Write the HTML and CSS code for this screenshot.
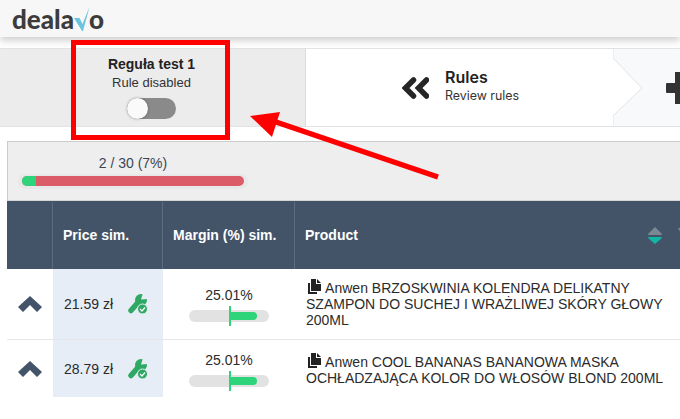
FILE: index.html
```html
<!DOCTYPE html>
<html lang="pl">
<head>
<meta charset="utf-8">
<title>Dealavo</title>
<link rel="stylesheet" href="styles.css">
</head>
<body>
<header class="topbar">
  <div class="logo"><span>deala</span><svg class="logo-v" width="16" height="25" viewBox="0 0 16 25"><path d="M0 11 H5.500 L8.500 17 L15.500 0 L9 24 H8 Z" fill="#6cc5de"/></svg><span>o</span></div>
</header>
<nav class="steps">
  <div class="step step-rule">
    <div class="rule-title">Reguła test 1</div>
    <div class="rule-sub">Rule disabled</div>
    <div class="toggle"><span class="knob"></span></div>
  </div>
  <div class="step step-rules">
    <svg class="dbl" width="27" height="22" viewBox="0 0 27 22"><path d="M11.500 3 L3.500 11 L11.500 19 M24.500 3 L16.500 11 L24.500 19" fill="none" stroke="#262626" stroke-width="5.500" stroke-linecap="round"/></svg>
    <div class="rules-text">
      <div class="rules-title">Rules</div>
      <div class="rules-sub">Review rules</div>
    </div>
  </div>
  <div class="step step-add">
    <svg class="chev" width="30" height="79" viewBox="0 0 30 79"><path d="M0 0 V10 L29 40 L0 68 V78" fill="#fff" stroke="#e3e3e3" stroke-width="1"/></svg>
    <svg class="plus" width="14" height="32" viewBox="0 0 14 32"><path d="M9 0 H14 V32 H9 V21 H1 Q0 21 0 20 V12 Q0 11 1 11 H9 Z" fill="#333"/></svg>
  </div>
</nav>
<section class="panel">
  <div class="progress">
    <div class="progress-label">2 / 30 (7%)</div>
    <div class="track"><div class="bar"><span class="bar-ok"></span></div></div>
  </div>
</section>
<div class="table">
  <div class="row head">
    <div class="c c1"></div>
    <div class="c c2">Price sim.</div>
    <div class="c c3">Margin (%) sim.</div>
    <div class="c c4">Product
      <svg class="sort" width="14" height="18" viewBox="0 0 14 18"><path d="M7 0 L14 7 Q14 8 13 8 H1 Q0 8 0 7 Z" fill="#7b8794"/><path d="M1 10 H13 Q14 10 14 11 L7 17 L0 11 Q0 10 1 10 Z" fill="#13b5a5"/></svg>
      <svg class="filter" width="8" height="8" viewBox="0 0 8 8"><path d="M0 0 H8 L4 7 Z" fill="#7b8794"/></svg>
    </div>
  </div>
  <div class="row r1">
    <div class="c c1"><svg width="24" height="16" viewBox="0 0 24 16"><path d="M0 11 L12 0 L24 11 L19 16 L12 9 L5 16 Z" fill="#43546a"/></svg></div>
    <div class="c c2 price"><span>21.59 zł</span>
      <svg class="wrench" width="20" height="20" viewBox="0 0 20 20"><circle cx="13" cy="6" r="6" fill="#2fa864"/><path d="M3 16.500 L10 8.500" stroke="#2fa864" stroke-width="5.500" stroke-linecap="round"/><path d="M13 5.500 L15 -1 H21 V5 Z" fill="#e6edf6"/><circle cx="14.500" cy="15" r="5" fill="#2fa864" stroke="#e6edf6" stroke-width="1"/><path d="M12 15 L14 17 L17 13.500" fill="none" stroke="#fff" stroke-width="1.200"/></svg>
    </div>
    <div class="c c3 margin"><div class="pct">25.01%</div><div class="gauge"><span class="gauge-fill"></span><span class="gauge-tick"></span></div></div>
    <div class="c c4 prod"><div><svg class="copy" width="14" height="15" viewBox="0 0 14 15"><path d="M3 0 H8 V5 H13 V12 H3 Z M9 0 L13 4 H9 Z M0 4 H2 V13 H9 V15 H0 Z" fill="#222"/></svg> Anwen BRZOSKWINIA KOLENDRA DELIKATNY SZAMPON DO SUCHEJ I WRAŻLIWEJ SKÓRY GŁOWY 200ML</div></div>
  </div>
  <div class="row r2">
    <div class="c c1"><svg width="24" height="16" viewBox="0 0 24 16"><path d="M0 11 L12 0 L24 11 L19 16 L12 9 L5 16 Z" fill="#43546a"/></svg></div>
    <div class="c c2 price"><span>28.79 zł</span>
      <svg class="wrench" width="20" height="20" viewBox="0 0 20 20"><circle cx="13" cy="6" r="6" fill="#2fa864"/><path d="M3 16.500 L10 8.500" stroke="#2fa864" stroke-width="5.500" stroke-linecap="round"/><path d="M13 5.500 L15 -1 H21 V5 Z" fill="#e6edf6"/><circle cx="14.500" cy="15" r="5" fill="#2fa864" stroke="#e6edf6" stroke-width="1"/><path d="M12 15 L14 17 L17 13.500" fill="none" stroke="#fff" stroke-width="1.200"/></svg>
    </div>
    <div class="c c3 margin"><div class="pct">25.01%</div><div class="gauge"><span class="gauge-fill"></span><span class="gauge-tick"></span></div></div>
    <div class="c c4 prod"><div><svg class="copy" width="14" height="15" viewBox="0 0 14 15"><path d="M3 0 H8 V5 H13 V12 H3 Z M9 0 L13 4 H9 Z M0 4 H2 V13 H9 V15 H0 Z" fill="#222"/></svg> Anwen COOL BANANAS BANANOWA MASKA OCHŁADZAJĄCA KOLOR DO WŁOSÓW BLOND 200ML</div></div>
  </div>
</div>
<div class="redbox"></div>
<svg class="arrow" width="200" height="90" viewBox="0 0 200 90"><path d="M188 69 L26 14" stroke="#f00" stroke-width="5.500" fill="none"/><path d="M0 8 L30 4 L22 29 Z" fill="#f00"/></svg>
</body>
</html>
```
FILE: styles.css
```css
html, body { margin: 0; padding: 0; }
body {
  width: 680px;
  height: 419px;
  overflow: hidden;
  position: relative;
  background: #fff;
  font-family: "Liberation Sans", Arial, sans-serif;
  color: #2b2b2b;
}
.topbar {
  height: 37px;
  background: #f7f7f7;
  box-shadow: 0 3px 8px rgba(0,0,0,.22);
  display: flex;
  align-items: center;
  padding-left: 12px;
  position: relative;
}
.logo {
  display: flex;
  align-items: center;
  font-family: Lato, sans-serif;
  font-weight: 900;
  font-size: 26px;
  color: #3c3c3c;
  line-height: 30px;
}
.logo-v { margin: 0 -1px 0 0; position: relative; top: 1px; }

.steps {
  display: flex;
  height: 77px;
  margin-top: 11px;
  border-top: 1px solid #e3e3e3;
  border-bottom: 1px solid #e3e3e3;
}
.step { display: flex; }
.step-rule {
  width: 305px;
  background: #ececec;
  border-right: 1px solid #dcdcdc;
  flex-direction: column;
  align-items: center;
}
.step-rule > * { position: relative; left: -1px; }
.rule-title { font-size: 14px; font-weight: 700; color: #222; margin-top: 6px; line-height: 18px; }
.rule-sub { font-size: 13px; color: #333; line-height: 18px; margin-top: 1px; }
.toggle {
  width: 49px;
  height: 21px;
  margin-top: 6px;
  border-radius: 11px;
  background: #8a8a8a;
  position: relative;
}
.knob {
  position: absolute;
  left: 0;
  top: 0;
  width: 21px;
  height: 21px;
  border-radius: 50%;
  background: #fafafa;
  box-shadow: 0 0 3px rgba(0,0,0,.3);
}
.step-rules {
  width: 307px;
  background: #fff;
  align-items: center;
  padding: 0 0 3px 96px;
  box-sizing: border-box;
  gap: 16px;
}
.dbl { margin-top: 3px; }
.rules-title { font-family: Inter, sans-serif; font-size: 16px; font-weight: 600; color: #222; line-height: 20px; }
.rules-sub { font-family: Inter, sans-serif; font-size: 12.400px; color: #333; line-height: 18px; }
.step-add {
  flex: 1;
  background: #f8f9fb;
  position: relative;
  align-items: center;
}
.chev { position: absolute; left: 0; top: -1px; }
.plus { position: absolute; left: 53px; top: 23px; }

.panel {
  margin: 14px 0 0 7px;
  height: 60px;
  background: #eee;
  border: 1px solid #ccc;
  border-right: 0;
  border-bottom: 1px solid #d4d4d4;
  box-sizing: border-box;
}
.progress { width: 230px; margin-left: 10px; }
.progress-label { text-align: center; font-size: 14px; color: #3a4658; line-height: 20px; padding-top: 11px; }
.track {
  margin-top: 1px;
  height: 15px;
  width: 230px;
  padding: 2px 4px;
  box-sizing: border-box;
  background: #e8e8e8;
  border-radius: 7px;
}
.bar {
  height: 10px;
  background: #dc5b69;
  border-radius: 5px;
  overflow: hidden;
  width: 222px;
}
.bar-ok { display: block; width: 6.300%; height: 100%; background: #2ed47a; }

.table { margin-left: 7px; font-size: 14px; }
.row { display: flex; }
.c { box-sizing: border-box; display: flex; align-items: center; }
.c1 { width: 46px; justify-content: center; }
.c2 { width: 110px; }
.c3 { width: 132px; }
.c4 { flex: 1; }
.head { height: 68px; background: #435468; color: #fff; font-weight: 700; padding-top: 1px; box-sizing: border-box; }
.head .c { border-right: 1px solid #5d6d81; padding: 0 0 1px 10px; }
.head .c4 { border-right: 0; position: relative; }
.sort { position: absolute; left: 353px; top: 25px; }
.filter { position: absolute; left: 383px; top: 26px; }
.r1 { height: 71px; border-bottom: 1px solid #e6e6e6; box-sizing: border-box; }
.r2 { height: 57px; }
.price { background: #e6edf6; padding: 0 15px 0 11px; justify-content: space-between; color: #2b2b2b; }
.margin { flex-direction: column; justify-content: center; }
.pct { line-height: 18px; color: #2b2b2b; }
.gauge { position: relative; width: 80px; height: 12px; background: #e2e2e2; border-radius: 6px; margin-top: 6px; }
.gauge-fill { position: absolute; left: 41px; top: 2px; width: 27px; height: 8px; background: #2ed47a; border-radius: 0 4px 4px 0; }
.gauge-tick { position: absolute; left: 40px; top: -4px; width: 2px; height: 20px; background: #2ed47a; }
.prod { padding: 0 10px 2px 11px; line-height: 16px; color: #2b2b2b; font-size: 14px; }
.copy { vertical-align: -1px; margin-left: 2px; }
.r2 .prod { align-items: flex-start; padding-top: 13px; }

.redbox {
  position: absolute;
  left: 71px;
  top: 40px;
  width: 149px;
  height: 90px;
  border: 5px solid #f00;
}
.arrow { position: absolute; left: 250px; top: 108px; }
```
